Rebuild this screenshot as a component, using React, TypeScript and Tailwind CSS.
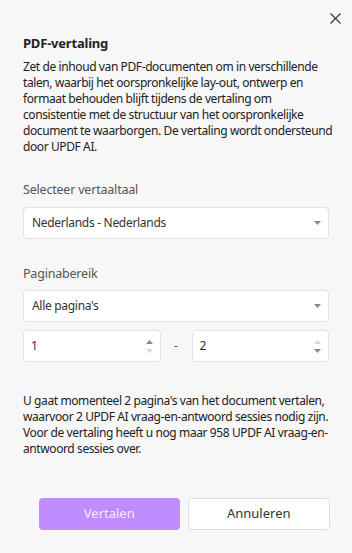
import React from "react";

const font = { fontFamily: '"Noto Sans", "Segoe UI", sans-serif' };

function Caret({ up, color }: { up?: boolean; color: string }) {
  return (
    <svg width="7" height="4" viewBox="0 0 7 4" className="block">
      {up ? <polygon points="0,4 7,4 3.5,0" fill={color} /> : <polygon points="0,0 7,0 3.5,4" fill={color} />}
    </svg>
  );
}

function Select({ value }: { value: string }) {
  return (
    <div className="h-[32px] w-full bg-white border border-[#e3e3e3] rounded-[4px] flex items-center pl-[8px] pr-[7px] text-[12px] tracking-[-0.3px] text-[#333]">
      <span className="flex-1">{value}</span>
      <Caret color="#8a8a8a" />
    </div>
  );
}

function NumInput({ value, upOn, downOn }: { value: string; upOn: boolean; downOn: boolean }) {
  return (
    <div className="h-[32px] flex-1 bg-white border border-[#e3e3e3] rounded-[4px] flex items-center pl-[7px] pr-[7px] text-[12px] text-[#333]">
      <span className="flex-1">{value}</span>
      <div className="flex flex-col gap-[5px]">
        <Caret up color={upOn ? "#8a8a8a" : "#d8d8d8"} />
        <Caret color={downOn ? "#8a8a8a" : "#d8d8d8"} />
      </div>
    </div>
  );
}

export default function App() {
  return (
    <div className="w-[352px] h-[553px] bg-[#f7f7f7] flex flex-col" style={font}>
      <div className="flex justify-end pt-[13px] pr-[11px]">
        <svg width="11" height="11" viewBox="0 0 11 11">
          <path d="M0.5 0.5 L10.5 10.5 M10.5 0.5 L0.5 10.5" stroke="#333" strokeWidth="1.1" />
        </svg>
      </div>
      <div className="px-[23px] flex flex-col">
        <div className="mt-[10px] text-[13px] font-bold text-[#222] leading-[18px] tracking-[-0.2px]">PDF-vertaling</div>
        <p className="mt-[7px] -mr-[4px] text-[12px] leading-[16px] text-[#222] tracking-[-0.4px]">
          Zet de inhoud van PDF-documenten om in verschillende talen, waarbij het oorspronkelijke lay-out, ontwerp en formaat behouden blijft tijdens de vertaling om consistentie met de structuur van het oorspronkelijke document te waarborgen. De vertaling wordt ondersteund door UPDF AI.
        </p>
        <div className="mt-[27px] text-[12.5px] leading-[16px] text-[#555] tracking-[-0.2px]">Selecteer vertaaltaal</div>
        <div className="mt-[9px]">
          <Select value="Nederlands - Nederlands" />
        </div>
        <div className="mt-[27px] text-[12.5px] leading-[16px] text-[#555] tracking-[-0.2px]">Paginabereik</div>
        <div className="mt-[8px]">
          <Select value="Alle pagina's" />
        </div>
        <div className="mt-[8px] flex items-center">
          <NumInput value="1" upOn downOn={false} />
          <span className="w-[31px] text-center text-[12px] text-[#555]">-</span>
          <NumInput value="2" upOn={false} downOn />
        </div>
        <p className="mt-[31px] -mr-[4px] text-[12px] leading-[16px] text-[#222] tracking-[-0.4px]">
          U gaat momenteel 2 pagina's van het document vertalen, waarvoor 2 UPDF AI vraag-en-antwoord sessies nodig zijn. Voor de vertaling heeft u nog maar 958 UPDF AI vraag-en-antwoord sessies over.
        </p>
      </div>
      <div className="mt-auto mb-[23px] flex gap-[8px] pl-[39px] pr-[22px]">
        <button className="flex-1 h-[32px] rounded-[4px] bg-[#c18cff] text-[#f3e8ff] text-[13px]">Vertalen</button>
        <button className="flex-1 h-[32px] rounded-[4px] bg-white border border-[#dcdcdc] text-[#333] text-[13px]">Annuleren</button>
      </div>
    </div>
  );
}
